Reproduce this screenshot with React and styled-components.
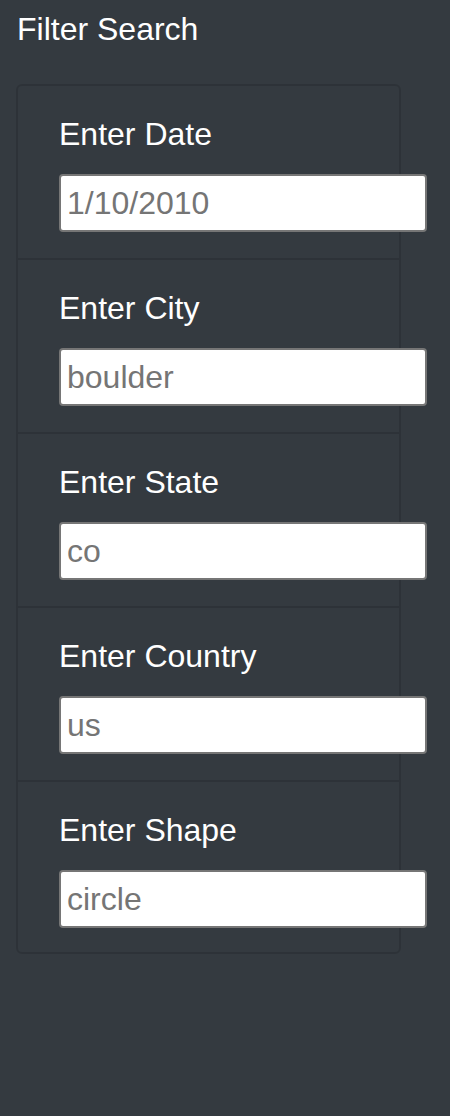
import React from "react";
import styled, { createGlobalStyle } from "styled-components";

const GlobalStyle = createGlobalStyle`
    html, body {
        margin: 0;
        padding: 0;
        background-color: #343a40;
    }
    body {
        min-height: 1116px;
        font-family: "Liberation Sans", Arial, sans-serif;
    }
`;

const Sidebar = styled.div`
    padding: 10px 0 0 17px;
    color: #ffffff;
`;

const Title = styled.h2`
    margin: 0 0 36px 0;
    font-size: 32px;
    font-weight: 400;
    line-height: 1.2;
`;

const FilterList = styled.ul`
    list-style: none;
    margin: 0 0 0 -1px;
    padding: 0;
    width: 381px;
    border: 2px solid rgba(0, 0, 0, 0.125);
    border-radius: 6px;
`;

const FilterItem = styled.li`
    padding: 24px 0 26px 41px;
    border-top: ${props => (props.first ? "none" : "2px solid rgba(0, 0, 0, 0.125)")};

    &:last-child {
        padding-bottom: 24px;
    }
`;

const FilterLabel = styled.label`
    display: block;
    margin-bottom: 16px;
    font-size: 32px;
    line-height: 48px;
    color: #ffffff;
`;

const FilterInput = styled.input`
    box-sizing: border-box;
    display: block;
    width: 368px;
    height: 58px;
    padding: 0 6px;
    border: 2px solid #767676;
    border-radius: 4px;
    background-color: #ffffff;
    font-family: "Liberation Sans", Arial, sans-serif;
    font-size: 32px;
    color: #212529;

    &::placeholder {
        color: #757575;
    }
`;

const filters = [
    { id: "datetime", label: "Enter Date", placeholder: "1/10/2010" },
    { id: "city", label: "Enter City", placeholder: "boulder" },
    { id: "state", label: "Enter State", placeholder: "co" },
    { id: "country", label: "Enter Country", placeholder: "us" },
    { id: "shape", label: "Enter Shape", placeholder: "circle" },
];

const App = () => {
    return (
        <>
            <GlobalStyle />
            <Sidebar>
                <Title>Filter Search</Title>
                <FilterList>
                    {filters.map((f, i) => (
                        <FilterItem key={f.id} first={i === 0}>
                            <FilterLabel htmlFor={f.id}>{f.label}</FilterLabel>
                            <FilterInput id={f.id} type="text" placeholder={f.placeholder} />
                        </FilterItem>
                    ))}
                </FilterList>
            </Sidebar>
        </>
    );
};

export default App;
